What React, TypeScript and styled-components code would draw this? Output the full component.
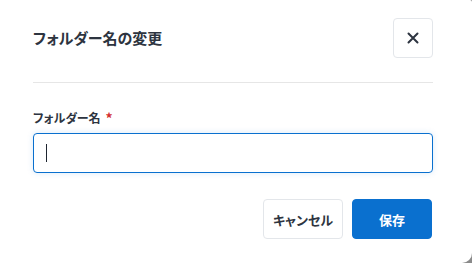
import React from "react";
import styled, { createGlobalStyle } from "styled-components";

const Global = createGlobalStyle`
  html, body { margin: 0; padding: 0; background: #8a8a8a; }
  body { font-family: "Noto Sans CJK JP", "Noto Sans", sans-serif; }
  * { box-sizing: border-box; }
`;

const Modal = styled.div`
  width: 472px;
  height: 263px;
  background: #ffffff;
  border-radius: 0 2px 10px 0;
  display: flex;
  flex-direction: column;
  padding: 0 39px 0 33px;
  font-feature-settings: "palt";
  color: #2d3440;
`;

const Header = styled.div`
  display: flex;
  align-items: center;
  justify-content: space-between;
  padding: 18px 0 24px;
  border-bottom: 1px solid #e6e6e6;
`;

const Title = styled.h2`
  margin: 0;
  font-size: 15px;
  font-weight: 700;
  line-height: 40px;
  color: #2d3440;
`;

const IconButton = styled.button`
  width: 40px;
  height: 40px;
  border: 1px solid #e3e6ea;
  border-radius: 4px;
  background: #fff;
  display: flex;
  align-items: center;
  justify-content: center;
  padding: 0;
  color: #2d3440;
`;

const Body = styled.div`
  display: flex;
  flex-direction: column;
  padding-top: 26px;
`;

const Label = styled.label`
  font-size: 12px;
  font-weight: 700;
  line-height: 18px;
  color: #2d3440;
  margin-bottom: 6px;
  display: flex;
  align-items: center;
  gap: 5px;
`;

const Required = styled.span`
  color: #d32f2f;
  font-size: 14px;
`;

const Input = styled.div`
  height: 40px;
  border: 1px solid #0a70cf;
  border-radius: 4px;
  box-shadow: 0 0 6px rgba(10, 112, 207, 0.15);
  display: flex;
  align-items: center;
  padding-left: 12px;
`;

const Caret = styled.span`
  width: 1px;
  height: 18px;
  background: #1e2530;
`;

const Footer = styled.div`
  display: flex;
  justify-content: flex-end;
  gap: 9px;
  padding-top: 26px;
  padding-right: 1px;
`;

const Button = styled.button<{ $primary?: boolean }>`
  width: 80px;
  height: 40px;
  border-radius: 4px;
  font-family: inherit;
  font-feature-settings: "palt";
  font-size: 13px;
  font-weight: 700;
  border: 1px solid ${(p) => (p.$primary ? "#0a70cf" : "#e3e6ea")};
  background: ${(p) => (p.$primary ? "#0a70cf" : "#ffffff")};
  color: ${(p) => (p.$primary ? "#ffffff" : "#2d3440")};
`;

export default function App() {
  return (
    <>
      <Global />
      <Modal>
        <Header>
          <Title>フォルダー名の変更</Title>
          <IconButton aria-label="閉じる">
            <svg width="12" height="12" viewBox="0 0 12 12">
              <path d="M1.5 1.5 L10.5 10.5 M10.5 1.5 L1.5 10.5" stroke="currentColor" strokeWidth="2" strokeLinecap="round" />
            </svg>
          </IconButton>
        </Header>
        <Body>
          <Label>
            フォルダー名<Required>*</Required>
          </Label>
          <Input>
            <Caret />
          </Input>
        </Body>
        <Footer>
          <Button>キャンセル</Button>
          <Button $primary>保存</Button>
        </Footer>
      </Modal>
    </>
  );
}
